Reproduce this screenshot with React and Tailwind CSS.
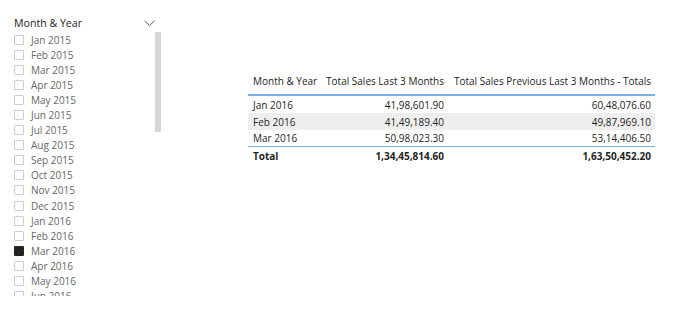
import React from 'react';

const months = [
  'Jan 2015', 'Feb 2015', 'Mar 2015', 'Apr 2015', 'May 2015', 'Jun 2015',
  'Jul 2015', 'Aug 2015', 'Sep 2015', 'Oct 2015', 'Nov 2015', 'Dec 2015',
  'Jan 2016', 'Feb 2016', 'Mar 2016', 'Apr 2016', 'May 2016', 'Jun 2016',
];

const rows = [
  { month: 'Jan 2016', last: '41,98,601.90', prev: '60,48,076.60' },
  { month: 'Feb 2016', last: '41,49,189.40', prev: '49,87,969.10' },
  { month: 'Mar 2016', last: '50,98,023.30', prev: '53,14,406.50' },
];

function Slicer() {
  return (
    <div className="w-[170px] pl-[14px] pt-[15px]">
      {/* Header */}
      <div className="flex w-[142px] items-center justify-between">
        <span className="text-[10.6px] leading-[16px] text-[#252423]">Month &amp; Year</span>
        <svg width="11" height="7" viewBox="0 0 11 7" className="mr-[1px]">
          <path d="M0.5 0.8 L5.5 5.6 L10.5 0.8" fill="none" stroke="#5f5f5f" strokeWidth="1" />
        </svg>
      </div>

      {/* List + scrollbar */}
      <div className="mt-[1px] flex">
        <div className="h-[264px] w-[141px] overflow-hidden">
          {months.map((m) => {
            const checked = m === 'Mar 2016';
            return (
              <div key={m} className="flex h-[15.1px] items-center gap-[7px]">
                <div
                  className={
                    checked
                      ? 'h-[10px] w-[10px] rounded-[1px] bg-[#252423]'
                      : 'h-[10px] w-[10px] rounded-[1px] border border-[#cdcdcd] bg-white'
                  }
                />
                <span className="text-[10px] leading-[14px] text-[#666666]">{m}</span>
              </div>
            );
          })}
        </div>
        <div className="h-[100px] w-[6px] bg-[#d6d6d6]" />
      </div>
    </div>
  );
}

function Table() {
  const head = 'flex justify-end whitespace-nowrap border-b-2 border-[#7db1e6] pb-[6px] pr-[4px]';
  return (
    <div className="ml-[78px] pt-[74px]">
      <div className="grid w-[407px] grid-cols-[74px_126px_207px] text-[10px] leading-[14px] text-[#252423]">
        {/* Header */}
        <div className="whitespace-nowrap border-b-2 border-[#7db1e6] pb-[6px] pl-[5px]">Month &amp; Year</div>
        <div className={head}>Total Sales Last 3 Months</div>
        <div className={head}>Total Sales Previous Last 3 Months - Totals</div>

        {rows.map((r, i) => {
          const bg = i === 1 ? 'bg-[#eeeeee]' : 'bg-white';
          const line = i === 2 ? 'border-b border-[#7db1e6]' : '';
          return (
            <React.Fragment key={r.month}>
              <div className={`flex h-[17px] items-center pl-[5px] ${bg} ${line}`}>{r.month}</div>
              <div className={`flex h-[17px] items-center justify-end pr-[4px] ${bg} ${line}`}>{r.last}</div>
              <div className={`flex h-[17px] items-center justify-end pr-[4px] ${bg} ${line}`}>{r.prev}</div>
            </React.Fragment>
          );
        })}

        {/* Total */}
        <div className="flex h-[17px] items-center pl-[5px] font-bold">Total</div>
        <div className="flex h-[17px] items-center justify-end pr-[4px] font-bold">1,34,45,814.60</div>
        <div className="flex h-[17px] items-center justify-end pr-[4px] font-bold">1,63,50,452.20</div>
      </div>
    </div>
  );
}

export default function App() {
  return (
    <div className="flex h-[317px] w-[690px] bg-white font-['Open_Sans',sans-serif]">
      <Slicer />
      <Table />
    </div>
  );
}
